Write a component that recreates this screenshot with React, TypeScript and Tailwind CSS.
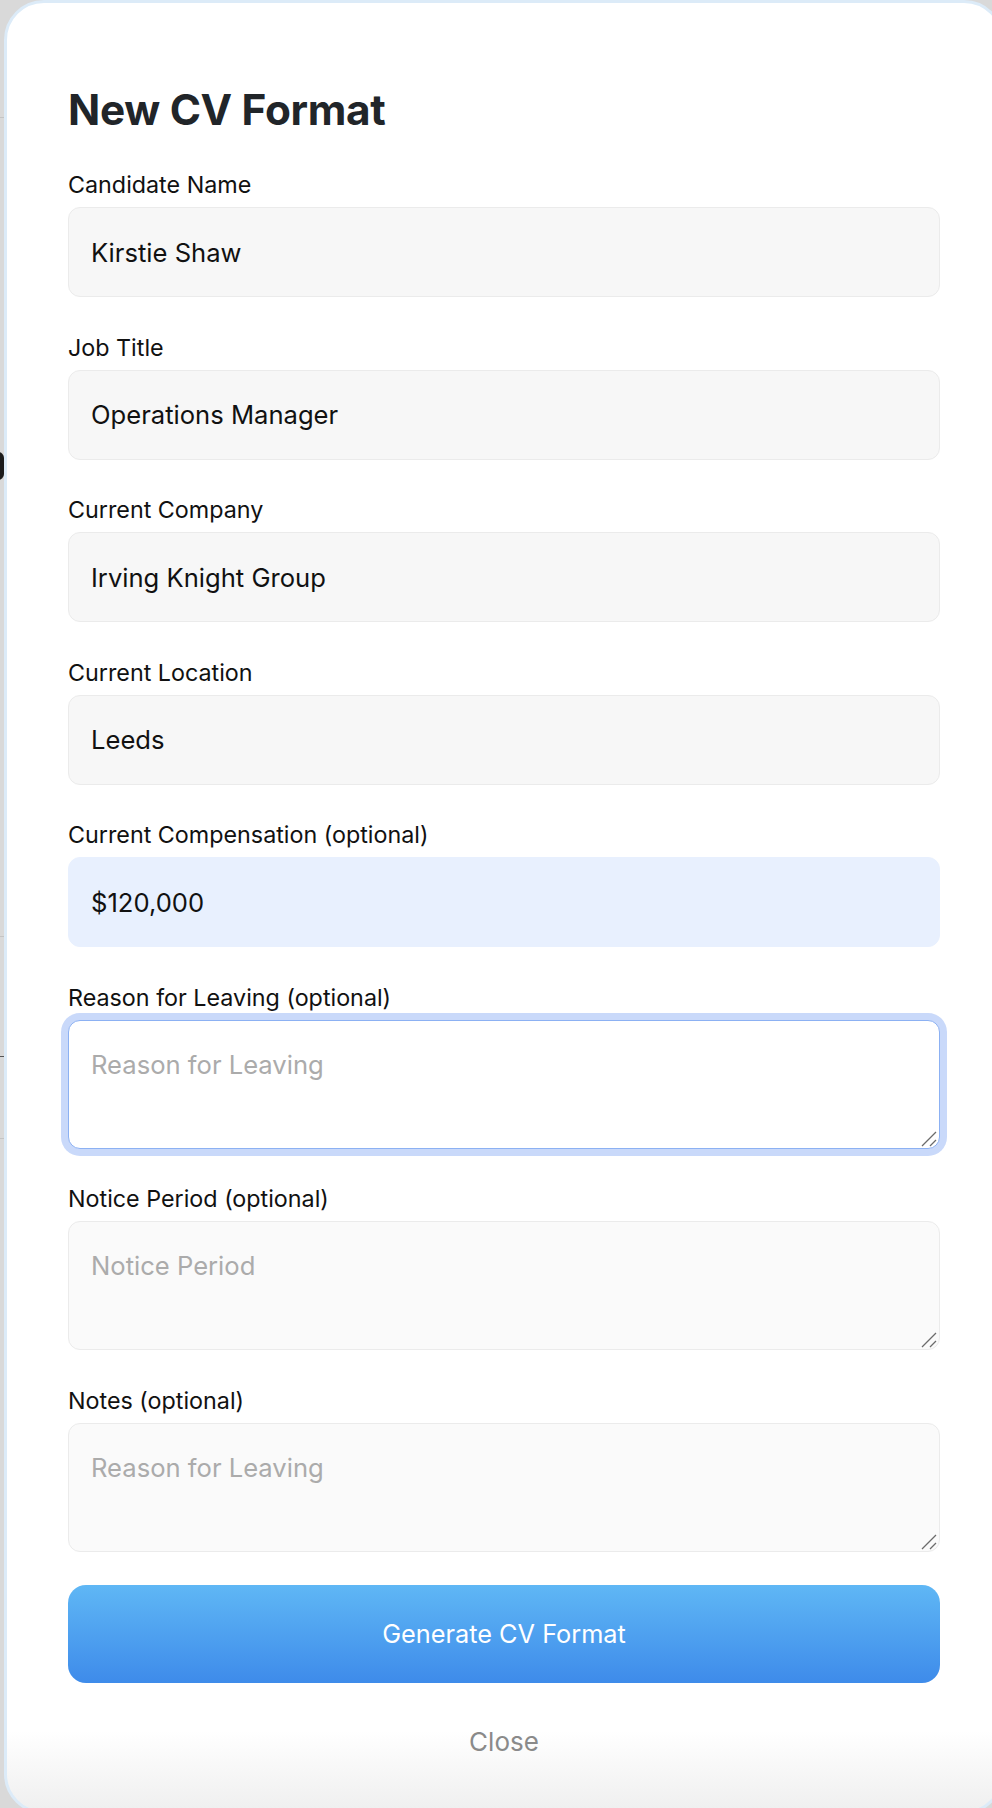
import React from "react";

const FIELDS = [
  { label: "Candidate Name", value: "Kirstie Shaw" },
  { label: "Job Title", value: "Operations Manager" },
  { label: "Current Company", value: "Irving Knight Group" },
  { label: "Current Location", value: "Leeds" },
];

function Grip() {
  return (
    <svg className="pointer-events-none absolute bottom-[2px] right-[3px]" width="16" height="16" viewBox="0 0 16 16">
      <path d="M1 15 L15 1 M9 15 L15 9" stroke="#6b6b6b" strokeWidth="1.3" fill="none" />
    </svg>
  );
}

function Area({ label, placeholder, focused }: { label: string; placeholder: string; focused?: boolean }) {
  return (
    <div>
      <label className="mb-[8px] block text-[23.3px] leading-[28px] text-[#111]">{label}</label>
      <div className="relative">
        <textarea
          placeholder={placeholder}
          className={
            focused
              ? "block h-[129px] w-full resize-none rounded-[12px] border-[1.5px] border-[#8cb1f3] bg-white px-[22px] py-[24px] text-[25.6px] leading-[40px] text-[#111] shadow-[0_0_0_7px_#c9d9fa] outline-none placeholder:text-[#ababab]"
              : "block h-[129px] w-full resize-none rounded-[12px] border border-[#ebebeb] bg-[#fafafa] px-[22px] py-[24px] text-[25.6px] leading-[40px] text-[#111] outline-none placeholder:text-[#ababab]"
          }
        />
        <Grip />
      </div>
    </div>
  );
}

export default function App() {
  return (
    <div className="flex h-[1808px] w-[992px] overflow-hidden bg-[#d9d9d9] font-['Inter','Noto_Sans',sans-serif]">
      {/* sliver of the page behind the modal */}
      <div className="flex w-[4px] shrink-0 flex-col">
        <div className="mt-[117px] h-[1px] w-[4px] bg-[#c4c4c4]" />
        <div className="-ml-[8px] mt-[334px] h-[28px] w-[12px] rounded-full bg-[#1c1c1c]" />
        <div className="mt-[456px] h-[1px] w-[4px] bg-[#c4c4c4]" />
        <div className="mt-[119px] h-[1px] w-[4px] bg-[#555]" />
        <div className="mt-[81px] h-[1px] w-[4px] bg-[#c4c4c4]" />
      </div>

      <div className="h-[1814px] w-[1000px] shrink-0 rounded-[40px] border-[3px] border-[#dcebf8] bg-[linear-gradient(to_bottom,#ffffff_calc(100%-80px),#efefef)] px-[61px] pt-[82px]">
        <h1 className="text-[42.3px] leading-[50px] font-bold text-[#212529] tracking-[-0.3px]">
          New CV Format
        </h1>

        <div className="mt-[36px] flex flex-col gap-[36.5px]">
          {FIELDS.map((f) => (
            <div key={f.label}>
              <label className="mb-[8px] block text-[23.3px] leading-[28px] text-[#111]">{f.label}</label>
              <input
                readOnly
                value={f.value}
                className="block h-[90px] w-full rounded-[12px] border border-[#ebebeb] bg-[#f7f7f7] px-[22px] text-[25.6px] text-[#111] outline-none"
              />
            </div>
          ))}

          <div>
            <label className="mb-[8px] block text-[23.3px] leading-[28px] text-[#111]">
              Current Compensation (optional)
            </label>
            <input
              readOnly
              value="$120,000"
              className="block h-[90px] w-full rounded-[12px] border border-[#e8f0fe] bg-[#e8f0fe] px-[22px] text-[25.6px] text-[#111] outline-none"
            />
          </div>

          <Area label="Reason for Leaving (optional)" placeholder="Reason for Leaving" focused />
          <Area label="Notice Period (optional)" placeholder="Notice Period" />
          <Area label="Notes (optional)" placeholder="Reason for Leaving" />
        </div>

        <button className="mt-[33.5px] block h-[98px] w-full rounded-[18px] bg-[linear-gradient(to_bottom,#5fb7f5,#3e8bea)] text-[25.3px] text-white">
          Generate CV Format
        </button>

        <button className="mx-auto mt-[39px] block text-[26px] leading-[39px] text-[#8a8a8a]">Close</button>
      </div>
    </div>
  );
}
